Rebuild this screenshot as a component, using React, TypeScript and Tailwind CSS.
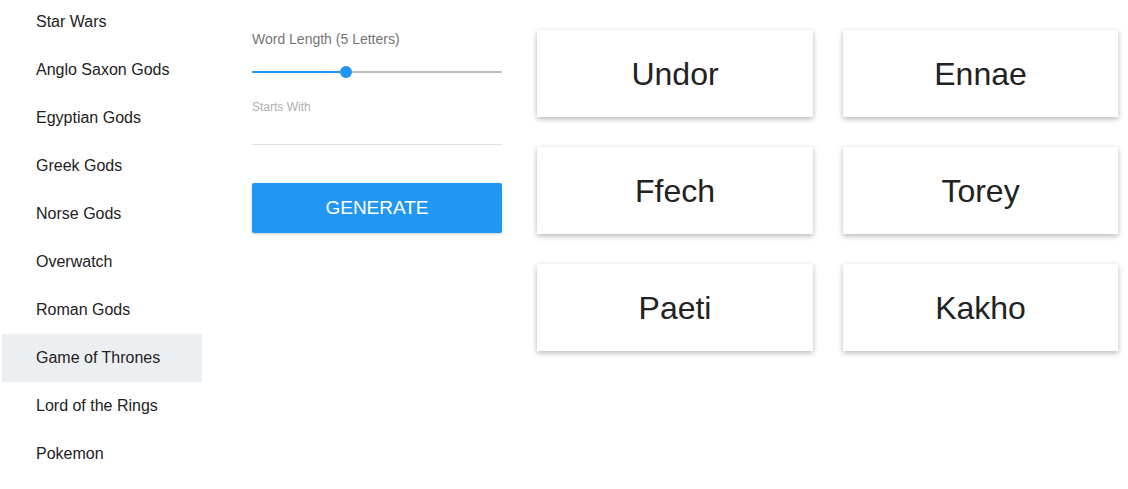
import React from "react";

const items = [
  "Star Wars",
  "Anglo Saxon Gods",
  "Egyptian Gods",
  "Greek Gods",
  "Norse Gods",
  "Overwatch",
  "Roman Gods",
  "Game of Thrones",
  "Lord of the Rings",
  "Pokemon",
];

const words = ["Undor", "Ennae", "Ffech", "Torey", "Paeti", "Kakho"];

export default function App() {
  return (
    <div
      className="w-[1128px] h-[489px] overflow-hidden bg-white flex"
      style={{ fontFamily: '"Liberation Sans", Arial, sans-serif' }}
    >
      <div className="w-[200px] ml-[2px] -mt-[2px] flex flex-col shrink-0">
        {items.map((it) => (
          <div
            key={it}
            className={`h-[48px] flex items-center pl-[34px] text-[16px] text-[#222222] ${
              it === "Game of Thrones" ? "bg-[#eceff1]" : ""
            }`}
          >
            {it}
          </div>
        ))}
      </div>

      <div className="w-[250px] ml-[50px] shrink-0 pt-[29px] flex flex-col">
        <div className="text-[14px] leading-[20px] text-[#757575]">Word Length (5 Letters)</div>
        <div className="relative h-[24px] mt-[11px]">
          <div className="absolute left-0 right-0 top-[11px] h-[2px] bg-[#bdbdbd]" />
          <div className="absolute left-0 w-[94px] top-[11px] h-[2px] bg-[#2196f3]" />
          <div className="absolute left-[88px] top-[6px] w-[12px] h-[12px] rounded-full bg-[#2196f3]" />
        </div>
        <div className="mt-[15px] text-[12px] leading-[16px] text-[#b0b0b0]">Starts With</div>
        <div className="mt-[29px] h-[1px] bg-[#e0e0e0]" />
        <button className="mt-[38px] h-[50px] w-full bg-[#2196f3] text-white text-[19px] rounded-[2px] shadow-[0_1px_3px_rgba(0,0,0,0.2)]">
          GENERATE
        </button>
      </div>

      <div className="ml-[35px] pt-[30px] grid grid-cols-[276px_275px] auto-rows-[87px] gap-[30px]">
        {words.map((w) => (
          <div
            key={w}
            className="bg-white flex items-center justify-center text-[32px] text-[#222222] shadow-[0_2px_5px_rgba(0,0,0,0.22),0_2px_8px_rgba(0,0,0,0.08)]"
          >
            {w}
          </div>
        ))}
      </div>
    </div>
  );
}
